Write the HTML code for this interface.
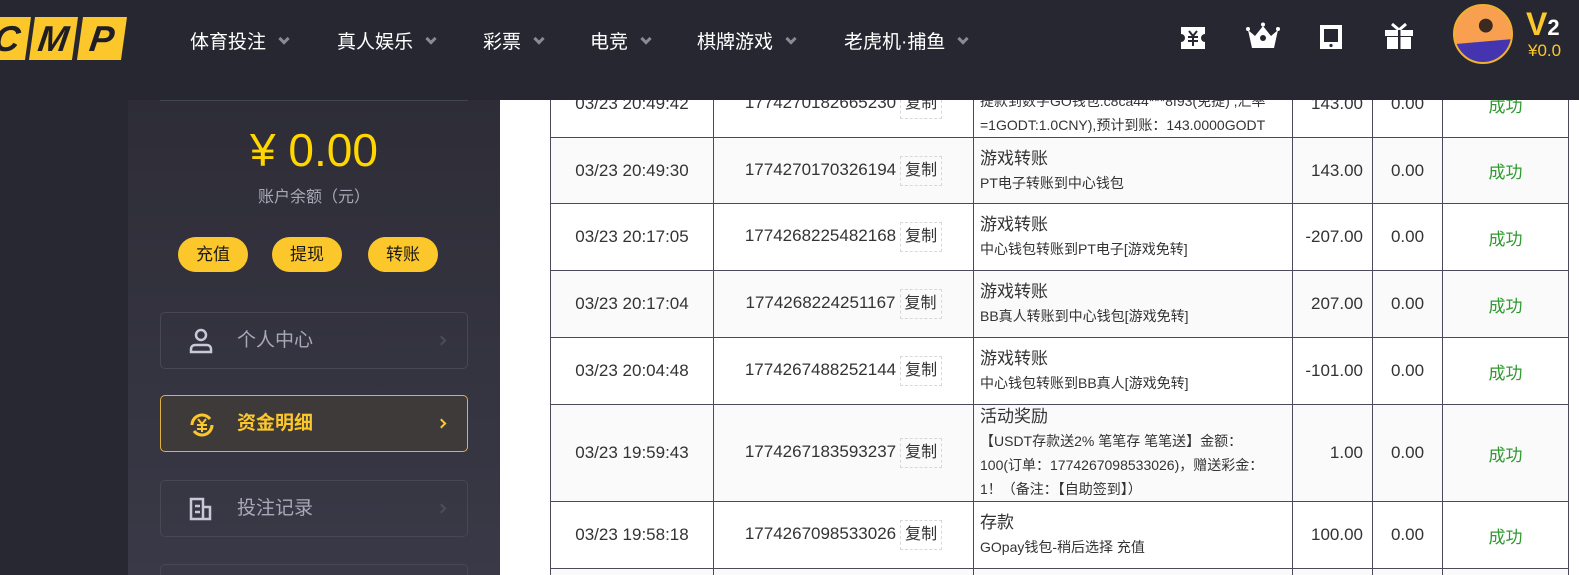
<!DOCTYPE html>
<html style="overflow:hidden;background:#282832"><head><meta charset="utf-8"><style>
*{margin:0;padding:0;box-sizing:border-box}
html,body{width:1579px;height:575px;overflow:hidden}
body{background:#282832;font-family:"Liberation Sans","Noto Sans CJK SC",sans-serif;position:relative}
#w{position:absolute;left:0;top:0;width:1579px;height:575px;overflow:hidden}
.hdr{position:absolute;left:0;top:0;width:1579px;height:100px;background:#272731;z-index:5}
.logo{position:absolute;top:17px;height:43px;background:#fcc72a;transform:skewX(-8deg);color:#1e1e24;font:italic 900 36px/43px "Liberation Sans",sans-serif;text-align:center}
.nav{position:absolute;top:27px;color:#fff;font-size:19px}
.nav i{display:inline-block;width:8px;height:8px;border-right:3px solid #8a8a96;border-bottom:3px solid #8a8a96;transform:rotate(45deg);margin-left:14px;position:relative;top:-5px}
.side{position:absolute;left:128px;top:100px;width:372px;height:475px;background:linear-gradient(#2e2d37,#393947)}
.main{position:absolute;left:500px;top:100px;width:1079px;height:475px;background:#fff}
.btn{position:absolute;top:237px;width:70px;height:35px;border-radius:18px;background:#fcc72a;color:#1a1a1a;font-size:17px;line-height:35px;text-align:center}
.mi{position:absolute;left:160px;width:308px;height:57px;border:1px solid #474755;border-radius:5px;color:#a8a8b8;font-size:19px;line-height:55px}
.mi span{position:absolute;left:76px}
.mi b.ar{position:absolute;right:22px;top:24px;width:7px;height:7px;border-right:2px solid #4c4c5a;border-top:2px solid #4c4c5a;transform:rotate(45deg)}
table{position:absolute;left:550px;top:70px;border-collapse:collapse;table-layout:fixed;color:#333}
td{border:1px solid #4a4a5c;font-size:17px;text-align:center;vertical-align:middle;padding:0}
tr.g td{background:#fafafa}
td.t{text-align:left;padding-left:6px;font-size:17px;line-height:24px}
td.t small{display:block;font-size:14px;line-height:24px}
td.a{text-align:right;padding-right:9px}
td.s{color:#2f9a2f}
.cp{display:inline-block;border:1px dashed #d8d8d8;font-size:16px;padding:3px 4px;margin-left:4px;line-height:22px}
</style></head><body><div id="w">
<div class="hdr">
<div class="logo" style="left:-14px;width:42px">C</div>
<div class="logo" style="left:32px;width:43px">M</div>
<div class="logo" style="left:80px;width:44px">P</div>
<div class="nav" style="left:190px">体育投注<i></i></div>
<div class="nav" style="left:337px">真人娱乐<i></i></div>
<div class="nav" style="left:483px">彩票<i></i></div>
<div class="nav" style="left:590px">电竞<i></i></div>
<div class="nav" style="left:697px">棋牌游戏<i></i></div>
<div class="nav" style="left:844px">老虎机·捕鱼<i></i></div>
<svg style="position:absolute;left:1180px;top:25px" width="26" height="26" viewBox="0 0 26 26"><path d="M1 2h24v7a4 4 0 0 0 0 8v7H1v-7a4 4 0 0 0 0-8z" fill="#fff"/><path d="M9 6l4 5 4-5M8 12h10M8 16h10M13 11v10" stroke="#272731" stroke-width="2" fill="none"/></svg>
<svg style="position:absolute;left:1246px;top:22px" width="34" height="28" viewBox="0 0 34 28"><circle cx="17" cy="2.5" r="2" fill="#fff"/><circle cx="2" cy="7" r="2" fill="#fff"/><circle cx="32" cy="7" r="2" fill="#fff"/><path d="M2 8l7 6 8-10 8 10 7-6-4 18H6z" fill="#fff"/><circle cx="17" cy="16" r="3" fill="#272731"/></svg>
<svg style="position:absolute;left:1319px;top:24px" width="24" height="26" viewBox="0 0 24 26"><rect x="1" y="1" width="22" height="24" fill="#fff"/><rect x="5" y="5" width="14" height="13" fill="#272731"/><circle cx="12" cy="21.5" r="1.6" fill="#272731"/></svg>
<svg style="position:absolute;left:1384px;top:22px" width="30" height="28" viewBox="0 0 30 28"><path d="M8 2l7 6 7-6" stroke="#fff" stroke-width="3" fill="none"/><rect x="1" y="8" width="28" height="6" fill="#fff"/><rect x="3" y="15" width="24" height="12" fill="#fff"/><rect x="14" y="8" width="2.5" height="19" fill="#272731"/></svg>
<div style="position:absolute;left:1453px;top:4px;width:60px;height:60px;border-radius:50%;border:2px solid #f0b030;background:radial-gradient(circle at 55% 35%,#3a2a22 0 14%,transparent 15%),linear-gradient(175deg,#f8a050 62%,#4434b0 63%)"></div>
<div style="position:absolute;left:1526px;top:6px;color:#fcc72a;font:bold 32px/36px 'Liberation Sans',sans-serif">V<span style="color:#fff;font-size:22px">2</span></div>
<div style="position:absolute;left:1528px;top:41px;color:#fcc72a;font-size:17px">¥0.0</div>
</div>
<div class="side"></div>
<div style="position:absolute;left:160px;top:100px;width:308px;height:1px;background:#444452"></div>
<div style="position:absolute;left:128px;top:120px;width:372px;text-align:center;color:#ffd600;font-size:46px;line-height:60px">¥ 0.00</div>
<div style="position:absolute;left:128px;top:183px;width:372px;text-align:center;color:#a8a8b8;font-size:16px">账户余额（元）</div>
<div class="btn" style="left:178px">充值</div>
<div class="btn" style="left:272px">提现</div>
<div class="btn" style="left:368px">转账</div>
<div class="mi" style="top:312px"><svg style="position:absolute;left:28px;top:15px" width="24" height="26" viewBox="0 0 24 26"><circle cx="12" cy="7" r="5" stroke="#c8c8d8" stroke-width="2.5" fill="none"/><path d="M2 24v-3a4 4 0 0 1 4-4h12a4 4 0 0 1 4 4v3z" stroke="#c8c8d8" stroke-width="2.5" fill="none"/></svg><span>个人中心</span><b class="ar"></b></div>
<div class="mi" style="top:395px;border-color:#e0b040;background:#3f3a3a;color:#fcc72a;font-weight:bold"><svg style="position:absolute;left:28px;top:16px" width="26" height="26" viewBox="0 0 26 26"><path d="M3 13a10 10 0 0 1 18-6M23 13a10 10 0 0 1-18 6" stroke="#fcc72a" stroke-width="3" fill="none"/><path d="M9 7l4 5 4-5M8 13h10M8 17h10M13 12v8" stroke="#fcc72a" stroke-width="2" fill="none"/></svg><span>资金明细</span><b class="ar" style="border-color:#fcc72a"></b></div>
<div class="mi" style="top:480px"><svg style="position:absolute;left:28px;top:16px" width="24" height="24" viewBox="0 0 24 24"><path d="M2 2h12v20H2zM14 10h7v12h-7" stroke="#c8c8d8" stroke-width="2.5" fill="none"/><path d="M6 9h5M6 15h5" stroke="#c8c8d8" stroke-width="2.5"/></svg><span>投注记录</span><b class="ar"></b></div>
<div class="mi" style="top:564px"></div>
<div class="main"></div>
<table>
<colgroup><col style="width:163px"><col style="width:260px"><col style="width:319px"><col style="width:80px"><col style="width:70px"><col style="width:126px"></colgroup>
<tr style="height:67px"><td>03/23 20:49:42</td><td>1774270182665230<span class="cp">复制</span></td><td class="t" style="vertical-align:bottom"><small>提款到数字GO钱包:c8ca44***8f93(免提) ,汇率<br>=1GODT:1.0CNY),预计到账：143.0000GODT</small></td><td class="a">143.00</td><td>0.00</td><td class="s">成功</td></tr>
<tr class="g" style="height:66px"><td>03/23 20:49:30</td><td>1774270170326194<span class="cp">复制</span></td><td class="t">游戏转账<small>PT电子转账到中心钱包</small></td><td class="a">143.00</td><td>0.00</td><td class="s">成功</td></tr>
<tr style="height:67px"><td>03/23 20:17:05</td><td>1774268225482168<span class="cp">复制</span></td><td class="t">游戏转账<small>中心钱包转账到PT电子[游戏免转]</small></td><td class="a">-207.00</td><td>0.00</td><td class="s">成功</td></tr>
<tr class="g" style="height:67px"><td>03/23 20:17:04</td><td>1774268224251167<span class="cp">复制</span></td><td class="t">游戏转账<small>BB真人转账到中心钱包[游戏免转]</small></td><td class="a">207.00</td><td>0.00</td><td class="s">成功</td></tr>
<tr style="height:67px"><td>03/23 20:04:48</td><td>1774267488252144<span class="cp">复制</span></td><td class="t">游戏转账<small>中心钱包转账到BB真人[游戏免转]</small></td><td class="a">-101.00</td><td>0.00</td><td class="s">成功</td></tr>
<tr class="g" style="height:94px"><td>03/23 19:59:43</td><td>1774267183593237<span class="cp">复制</span></td><td class="t">活动奖励<small>【USDT存款送2% 笔笔存 笔笔送】金额：<br>100(订单：1774267098533026)，赠送彩金：<br>1！（备注：【自助签到】）</small></td><td class="a">1.00</td><td>0.00</td><td class="s">成功</td></tr>
<tr style="height:67px"><td>03/23 19:58:18</td><td>1774267098533026<span class="cp">复制</span></td><td class="t">存款<small>GOpay钱包-稍后选择 充值</small></td><td class="a">100.00</td><td>0.00</td><td class="s">成功</td></tr>
<tr class="g" style="height:67px"><td></td><td></td><td class="t">存款</td><td></td><td></td><td></td></tr>
</table>
</div></body></html>
